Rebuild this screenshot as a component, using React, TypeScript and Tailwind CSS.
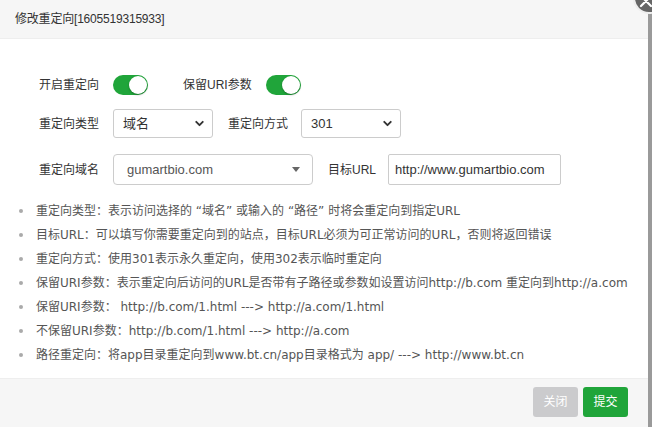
import { ChevronDown } from "lucide-react";

const font = { fontFamily: '"Liberation Sans", "Noto Sans CJK SC", sans-serif' };
const listFont = { fontFamily: '"DejaVu Sans", "Noto Sans CJK SC", sans-serif' };

function Toggle() {
  return (
    <div className="relative h-[20px] w-[35px] shrink-0 rounded-full bg-[#20a53a]">
      <div className="absolute right-[1px] top-[1px] h-[18px] w-[18px] rounded-full bg-white shadow-[0_1px_2px_rgba(0,0,0,0.3)]" />
    </div>
  );
}

function Select({ value, width }: { value: string; width: string }) {
  return (
    <div className={`flex h-[29px] ${width} shrink-0 items-center justify-between rounded-[3px] border border-[#ccc] bg-white pl-[9px] pr-[6px] text-[13px] text-[#333]`}>
      <span>{value}</span>
      <ChevronDown size={13} strokeWidth={3.5} className="text-[#333]" />
    </div>
  );
}

const notes = [
  "重定向类型：表示访问选择的 “域名” 或输入的 “路径” 时将会重定向到指定URL",
  "目标URL：可以填写你需要重定向到的站点，目标URL必须为可正常访问的URL，否则将返回错误",
  "重定向方式：使用301表示永久重定向，使用302表示临时重定向",
  "保留URI参数：表示重定向后访问的URL是否带有子路径或参数如设置访问http://b.com 重定向到http://a.com",
  "保留URI参数： http://b.com/1.html ---> http://a.com/1.html",
  "不保留URI参数：http://b.com/1.html ---> http://a.com",
  "路径重定向：将app目录重定向到www.bt.cn/app目录格式为 app/ ---> http://www.bt.cn",
];

export default function App() {
  return (
    <div className="flex h-[427px] w-[652px] overflow-hidden bg-[#9a9a9a]" style={font}>
      <div className="relative flex h-full w-[648px] shrink-0 flex-col bg-white">
        {/* header */}
        <div className="flex h-[39px] shrink-0 items-center border-b border-[#eee] bg-[#f6f6f6] pl-[15px] text-[12px] tracking-[-0.2px] text-[#333]">
          修改重定向[1605519315933]
        </div>

        {/* body */}
        <div className="flex-1 pt-[36px]">
          <div className="flex h-[20px] items-center pl-[39px] text-[12px] text-[#333]">
            <span className="w-[60px] shrink-0 whitespace-nowrap">开启重定向</span>
            <div className="ml-[14px]">
              <Toggle />
            </div>
            <span className="ml-[35px] w-[70px] shrink-0 whitespace-nowrap">保留URI参数</span>
            <div className="ml-[13px]">
              <Toggle />
            </div>
          </div>

          <div className="mt-[14px] flex h-[29px] items-center pl-[39px] text-[12px] text-[#333]">
            <span className="w-[60px] shrink-0 whitespace-nowrap">重定向类型</span>
            <div className="ml-[14px]">
              <Select value="域名" width="w-[100px]" />
            </div>
            <span className="ml-[15px] w-[60px] shrink-0 whitespace-nowrap">重定向方式</span>
            <div className="ml-[13px]">
              <Select value="301" width="w-[100px]" />
            </div>
          </div>

          <div className="mt-[16px] flex h-[31px] items-center pl-[39px] text-[12px] text-[#333]">
            <span className="w-[60px] shrink-0 whitespace-nowrap">重定向域名</span>
            <div className="ml-[14px] flex h-[31px] w-[200px] shrink-0 items-center justify-between rounded-[4px] border border-[#ccc] bg-white pl-[13px] pr-[12px] text-[13px] text-[#555]">
              <span>gumartbio.com</span>
              <span className="h-0 w-0 border-x-[4px] border-t-[5px] border-x-transparent border-t-[#666]" />
            </div>
            <span className="ml-[15px] w-[46px] shrink-0 whitespace-nowrap">目标URL</span>
            <div className="ml-[14px] flex h-[31px] w-[173px] shrink-0 items-center rounded-[2px] border border-[#ccc] bg-white pl-[6px] text-[13px] text-[#333]">
              http://www.gumartbio.com
            </div>
          </div>

          <ul className="mt-[14px] text-[12px] text-[#555]" style={listFont}>
            {notes.map((n) => (
              <li key={n} className="flex h-[24px] items-center pl-[19px]">
                <span className="mr-[13px] h-[4px] w-[4px] shrink-0 rounded-full bg-[#aaa]" />
                <span className="whitespace-nowrap">{n}</span>
              </li>
            ))}
          </ul>
        </div>

        {/* footer */}
        <div className="flex h-[49px] shrink-0 items-start justify-end gap-[5px] border-t border-[#eee] bg-[#f6f6f6] pr-[20px] pt-[8px]">
          <button className="h-[30px] w-[45px] rounded-[3px] bg-[#cbcbcd] text-[12px] text-white">关闭</button>
          <button className="h-[30px] w-[45px] rounded-[3px] bg-[#20a53a] text-[12px] text-white">提交</button>
        </div>

        {/* close button */}
        <div className="absolute left-[633px] top-[-18px] flex h-[32px] w-[32px] items-center justify-center rounded-full border-[2px] border-[#eee] bg-[#666]">
          <svg width="14" height="14" viewBox="0 0 14 14" className="translate-x-[-3px] translate-y-[3px]">
            <path d="M2 2L12 12M12 2L2 12" stroke="#fff" strokeWidth="2.2" strokeLinecap="round" />
          </svg>
        </div>
      </div>
      <div className="flex-1" />
    </div>
  );
}
